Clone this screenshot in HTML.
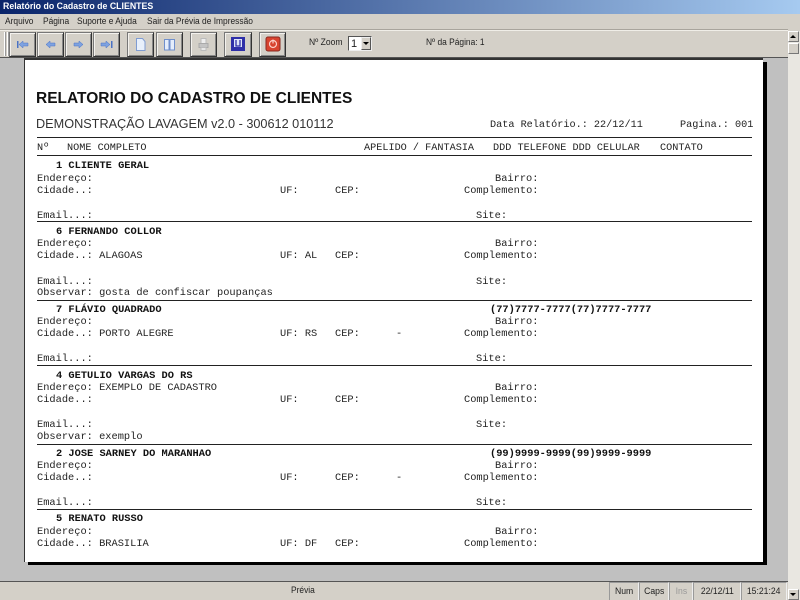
<!DOCTYPE html>
<html><head><meta charset="utf-8">
<style>
html,body{margin:0;padding:0}
body{width:800px;height:600px;overflow:hidden;position:relative;background:#c0c0c0;font-family:"Liberation Sans",sans-serif}
div{position:absolute}
.ui{font-size:9.6px;color:#222;white-space:nowrap;line-height:12px;transform:scaleX(.875);transform-origin:left center}
.b{width:25px;height:23px;background:#d4d0c8;border:1px solid;border-color:#777 #333 #333 #777;box-shadow:inset 1px 1px 0 #f4f2ee,inset -1px -1px 0 #888}
.b svg{position:absolute;left:0;top:0}
.m{font-family:"Liberation Mono",monospace;font-size:10.35px;line-height:12px;color:#222;white-space:pre;position:absolute;margin-top:1px}
.h{font-size:10.2px;margin-top:2px}
.n{font-weight:bold;color:#111}
.r{position:absolute;left:37px;width:715px;height:1px;background:#222}
.s{position:absolute;top:582px;height:18px;border-left:1px solid #999;border-top:1px solid #999;border-right:1px solid #eee;box-sizing:border-box;line-height:14px;text-align:center;color:#222}
.s span{display:inline-block;font-size:9.6px;transform:scaleX(.9);white-space:nowrap}
</style></head><body>
<!-- title -->
<div style="left:0;top:0;width:800px;height:14px;background:linear-gradient(90deg,#0a246a,#a6caf0)"></div>
<div class="ui" style="left:3px;top:1px;color:#fff;font-weight:bold;transform:scaleX(.915)">Relatório do Cadastro de CLIENTES</div>
<!-- menu + toolbar -->
<div style="left:0;top:14px;width:800px;height:17px;background:#d4d0c8"></div>
<div style="left:0;top:31px;width:788px;height:27px;background:#d4d0c8"></div>
<div class="ui" style="left:5px;top:16px">Arquivo</div>
<div class="ui" style="left:43px;top:16px">Página</div>
<div class="ui" style="left:77px;top:16px">Suporte e Ajuda</div>
<div class="ui" style="left:147px;top:16px">Sair da Prévia de Impressão</div>
<div style="left:0;top:29px;width:788px;height:1px;background:#a8a49c"></div>
<div style="left:0;top:30px;width:788px;height:1px;background:#f0eee8"></div>
<div style="left:4px;top:32px;width:1px;height:24px;background:#fff;box-shadow:1px 0 0 #999,3px 0 0 #fff,4px 0 0 #999"></div>
<div style="left:0;top:57px;width:788px;height:1px;background:#555"></div>

<div class="b" style="left:9px;top:32px"><svg width="25" height="23"><rect x="7" y="8" width="1.5" height="7" fill="#4a72c4"/><path d="M9 11.500l4-3.500v2h5v3h-5v2z" fill="#7ea2e0" stroke="#4a72c4" stroke-width=".5"/></svg></div>
<div class="b" style="left:37px;top:32px"><svg width="25" height="23"><path d="M8 11.500l4-3.500v2h5v3h-5v2z" fill="#7ea2e0" stroke="#4a72c4" stroke-width=".5"/></svg></div>
<div class="b" style="left:65px;top:32px"><svg width="25" height="23"><path d="M17 11.500l-4-3.500v2H8v3h5v2z" fill="#7ea2e0" stroke="#4a72c4" stroke-width=".5"/></svg></div>
<div class="b" style="left:93px;top:32px"><svg width="25" height="23"><path d="M16 11.500l-4-3.500v2H7v3h5v2z" fill="#7ea2e0" stroke="#4a72c4" stroke-width=".5"/><rect x="17" y="8" width="1.5" height="7" fill="#4a72c4"/></svg></div>
<div class="b" style="left:127px;top:32px"><svg width="25" height="23"><path d="M8.500 5.500h6l2.500 3v9H8.500z" fill="#e8f0fb" stroke="#7f9cd2"/></svg></div>
<div class="b" style="left:156px;top:32px"><svg width="25" height="23"><path d="M7.500 6.500h4.500v10.500H7.500zM13 6.500h4.500v10.500H13z" fill="#e4edfb" stroke="#6f8fcc"/></svg></div>
<div class="b" style="left:190px;top:32px"><svg width="25" height="23"><path d="M10 5.500h5v5h-5z" fill="#eee" stroke="#bbb"/><path d="M8 10.500h9v4H8z" fill="#c4c4c4" stroke="#aaa"/><path d="M10 14.500h5v3h-5z" fill="#e8e8e8" stroke="#bbb"/></svg></div>
<div class="b" style="left:224px;top:32px;width:26px"><svg width="26" height="23"><rect x="6" y="4" width="14" height="14" fill="#2f2fa8"/><rect x="9" y="6" width="8" height="8" fill="#dfe4f8"/><path d="M11 7v6h4V7" fill="none" stroke="#2f2fa8" stroke-width="1.300"/></svg></div>
<div class="b" style="left:259px;top:32px"><svg width="25" height="23"><rect x="6" y="4" width="14" height="14" rx="2" fill="#d8432f" stroke="#8a2a20"/><circle cx="13" cy="11" r="3.500" fill="none" stroke="#fbd0c8" stroke-width="1.200"/><rect x="12.400" y="6.500" width="1.200" height="4" fill="#fbd0c8"/></svg></div>

<div class="ui" style="left:309px;top:37px;transform:scaleX(.89)">Nº Zoom</div>
<div style="left:348px;top:36px;width:24px;height:15px;background:#fff;border:1px solid;border-color:#555 #eee #eee #555;box-sizing:border-box"></div>
<div class="ui" style="left:351px;top:38px;font-size:11px;transform:none">1</div>
<div style="left:361px;top:37px;width:10px;height:13px;background:#d4d0c8;border:1px solid;border-color:#eee #555 #555 #eee;box-sizing:border-box"></div>
<div style="left:363px;top:42px;width:0;height:0;border-left:3px solid transparent;border-right:3px solid transparent;border-top:3px solid #000"></div>
<div class="ui" style="left:426px;top:37px">Nº da Página: 1</div>

<!-- scrollbar -->
<div style="left:788px;top:31px;width:12px;height:569px;background:#e9e7e1"></div>
<div style="left:788px;top:31px;width:11px;height:11px;background:#d4d0c8;border:1px solid;border-color:#fff #777 #777 #fff;box-sizing:border-box"></div>
<div style="left:790px;top:35px;width:0;height:0;border-left:3px solid transparent;border-right:3px solid transparent;border-bottom:3px solid #000"></div>
<div style="left:788px;top:43px;width:11px;height:11px;background:#d4d0c8;border:1px solid;border-color:#fff #777 #777 #fff;box-sizing:border-box"></div>
<div style="left:788px;top:589px;width:11px;height:11px;background:#d4d0c8;border:1px solid;border-color:#fff #777 #777 #fff;box-sizing:border-box"></div>
<div style="left:790px;top:593px;width:0;height:0;border-left:3px solid transparent;border-right:3px solid transparent;border-top:3px solid #000"></div>

<!-- page -->
<div style="left:28px;top:62px;width:739px;height:503px;background:#000"></div>
<div style="left:24px;top:58px;width:739px;height:504px;background:#fff;border-left:1px solid #333;border-top:2px solid #333;box-sizing:border-box"></div>

<div style="left:36px;top:91px;font:bold 15.5px/16px 'Liberation Sans',sans-serif;color:#111;white-space:nowrap">RELATORIO DO CADASTRO DE CLIENTES</div>
<div style="left:36px;top:117px;font:12.7px/14px 'Liberation Sans',sans-serif;color:#333;white-space:nowrap">DEMONSTRAÇÃO LAVAGEM v2.0 - 300612 010112</div>
<div class="m h" style="left:490px;top:118px">Data Relatório.: 22/12/11</div>
<div class="m h" style="left:680px;top:118px">Pagina.: 001</div>
<div class="r" style="top:137px"></div>
<div class="m h" style="left:37px;top:141px">Nº</div>
<div class="m h" style="left:67px;top:141px">NOME COMPLETO</div>
<div class="m h" style="left:364px;top:141px">APELIDO / FANTASIA</div>
<div class="m h" style="left:493px;top:141px">DDD TELEFONE DDD CELULAR</div>
<div class="m h" style="left:660px;top:141px">CONTATO</div>
<div class="r" style="top:155px"></div>

<!-- 1 -->
<div class="m n" style="left:56px;top:159px">1 CLIENTE GERAL</div>
<div class="m" style="left:37px;top:172px">Endereço:</div><div class="m" style="left:495px;top:172px">Bairro:</div>
<div class="m" style="left:37px;top:184px">Cidade..:</div><div class="m" style="left:280px;top:184px">UF:</div><div class="m" style="left:335px;top:184px">CEP:</div><div class="m" style="left:464px;top:184px">Complemento:</div>
<div class="m" style="left:37px;top:209px">Email...:</div><div class="m" style="left:476px;top:209px">Site:</div>
<div class="r" style="top:221px"></div>
<!-- 6 -->
<div class="m n" style="left:56px;top:225px">6 FERNANDO COLLOR</div>
<div class="m" style="left:37px;top:237px">Endereço:</div><div class="m" style="left:495px;top:237px">Bairro:</div>
<div class="m" style="left:37px;top:249px">Cidade..: ALAGOAS</div><div class="m" style="left:280px;top:249px">UF: AL</div><div class="m" style="left:335px;top:249px">CEP:</div><div class="m" style="left:464px;top:249px">Complemento:</div>
<div class="m" style="left:37px;top:275px">Email...:</div><div class="m" style="left:476px;top:275px">Site:</div>
<div class="m" style="left:37px;top:286px">Observar: gosta de confiscar poupanças</div>
<div class="r" style="top:300px"></div>
<!-- 7 -->
<div class="m n" style="left:56px;top:303px">7 FLÁVIO QUADRADO</div><div class="m n" style="left:490px;top:303px">(77)7777-7777(77)7777-7777</div>
<div class="m" style="left:37px;top:315px">Endereço:</div><div class="m" style="left:495px;top:315px">Bairro:</div>
<div class="m" style="left:37px;top:327px">Cidade..: PORTO ALEGRE</div><div class="m" style="left:280px;top:327px">UF: RS</div><div class="m" style="left:335px;top:327px">CEP:</div><div class="m" style="left:396px;top:327px">-</div><div class="m" style="left:464px;top:327px">Complemento:</div>
<div class="m" style="left:37px;top:352px">Email...:</div><div class="m" style="left:476px;top:352px">Site:</div>
<div class="r" style="top:365px"></div>
<!-- 4 -->
<div class="m n" style="left:56px;top:369px">4 GETULIO VARGAS DO RS</div>
<div class="m" style="left:37px;top:381px">Endereço: EXEMPLO DE CADASTRO</div><div class="m" style="left:495px;top:381px">Bairro:</div>
<div class="m" style="left:37px;top:393px">Cidade..:</div><div class="m" style="left:280px;top:393px">UF:</div><div class="m" style="left:335px;top:393px">CEP:</div><div class="m" style="left:464px;top:393px">Complemento:</div>
<div class="m" style="left:37px;top:418px">Email...:</div><div class="m" style="left:476px;top:418px">Site:</div>
<div class="m" style="left:37px;top:430px">Observar: exemplo</div>
<div class="r" style="top:444px"></div>
<!-- 2 -->
<div class="m n" style="left:56px;top:447px">2 JOSE SARNEY DO MARANHAO</div><div class="m n" style="left:490px;top:447px">(99)9999-9999(99)9999-9999</div>
<div class="m" style="left:37px;top:459px">Endereço:</div><div class="m" style="left:495px;top:459px">Bairro:</div>
<div class="m" style="left:37px;top:471px">Cidade..:</div><div class="m" style="left:280px;top:471px">UF:</div><div class="m" style="left:335px;top:471px">CEP:</div><div class="m" style="left:396px;top:471px">-</div><div class="m" style="left:464px;top:471px">Complemento:</div>
<div class="m" style="left:37px;top:496px">Email...:</div><div class="m" style="left:476px;top:496px">Site:</div>
<div class="r" style="top:509px"></div>
<!-- 5 -->
<div class="m n" style="left:56px;top:512px">5 RENATO RUSSO</div>
<div class="m" style="left:37px;top:525px">Endereço:</div><div class="m" style="left:495px;top:525px">Bairro:</div>
<div class="m" style="left:37px;top:537px">Cidade..: BRASILIA</div><div class="m" style="left:280px;top:537px">UF: DF</div><div class="m" style="left:335px;top:537px">CEP:</div><div class="m" style="left:464px;top:537px">Complemento:</div>

<!-- status -->
<div style="left:0;top:581px;width:788px;height:1px;background:#555"></div>
<div style="left:0;top:582px;width:788px;height:18px;background:#d4d0c8"></div>
<div class="ui" style="left:291px;top:585px">Prévia</div>
<div class="s" style="left:609px;width:30px"><span>Num</span></div>
<div class="s" style="left:639px;width:30px"><span>Caps</span></div>
<div class="s" style="left:669px;width:24px;color:#999"><span>Ins</span></div>
<div class="s" style="left:693px;width:48px"><span>22/12/11</span></div>
<div class="s" style="left:741px;width:46px"><span>15:21:24</span></div>
</body></html>
